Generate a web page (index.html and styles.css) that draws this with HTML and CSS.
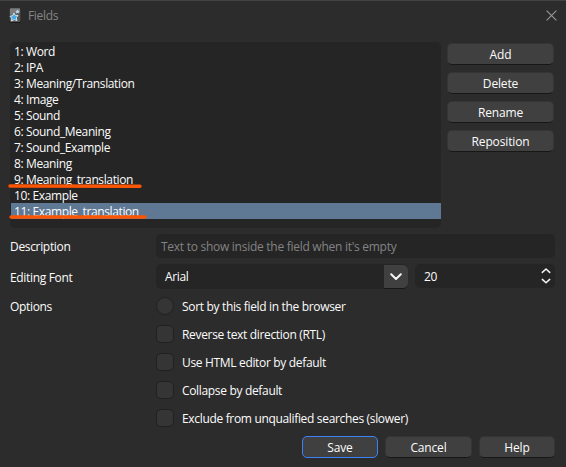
FILE: index.html
```html
<!DOCTYPE html>
<html lang="en">
<head>
<meta charset="utf-8">
<title>Fields</title>
<link rel="stylesheet" href="styles.css">
</head>
<body>
<div class="dialog">
  <header class="titlebar">
    <svg class="app-icon" width="12" height="15" viewBox="0 0 12 15">
      <rect x="0" y="0" width="12" height="15" rx="1.5" fill="#1c1c1c"/>
      <rect x="0.5" y="0" width="11" height="14" rx="1.5" fill="#555"/>
      <path class="sheen" d="M1 .5h10v4L1 7z"/>
      <path class="star" d="M4.800 5l1.400 2.300 2.800.2-1.700 2.200.7 2.900-2.900-1-2.500 1.400.1-2.900L1 8.300l2.900-.7z"/>
      <path class="small-star" d="M8.500 1.500l.7 1.300 1.500.2-1.100 1.100.2 1.500-1.400-.7-1.300.6.2-1.500-1-1 1.500-.3z"/>
    </svg>
    <span class="title">Fields</span>
    <svg class="close" width="11" height="11" viewBox="0 0 11 11"><path d="M.6.6l9.800 9.800M10.400.6L.6 10.400"/></svg>
  </header>
  <main class="top">
    <ul class="list">
      <li>1: Word</li>
      <li>2: IPA</li>
      <li>3: Meaning/Translation</li>
      <li>4: Image</li>
      <li>5: Sound</li>
      <li>6: Sound_Meaning</li>
      <li>7: Sound_Example</li>
      <li>8: Meaning</li>
      <li>9: Meaning_translation
        <svg class="mark" width="135" height="6" viewBox="0 0 135 6"><path d="M2 3L132 3.200"/></svg></li>
      <li>10: Example</li>
      <li class="selected">11: Example_translation
        <svg class="mark mark-last" width="139" height="6" viewBox="0 0 139 6"><path d="M2 3H136"/></svg></li>
    </ul>
    <div class="actions">
      <button>Add</button>
      <button>Delete</button>
      <button>Rename</button>
      <button>Reposition</button>
    </div>
  </main>
  <section class="form">
    <label>Description</label>
    <div class="field description">Text to show inside the field when it's empty</div>
    <label class="font-label">Editing Font</label>
    <div class="font-row">
      <div class="field combo"><span>Arial</span>
        <div class="drop"><svg width="12" height="8" viewBox="0 0 12 8"><path d="M1.200 1.300L6 6l4.800-4.700" stroke-width="2"/></svg></div>
      </div>
      <div class="field spin"><span>20</span>
        <svg width="10" height="18" viewBox="0 0 10 18"><path d="M1.300 5.400L5 2l3.700 3.400M1.300 12.400L5 15.800l3.700-3.400" stroke-width="1.500"/></svg>
      </div>
    </div>
    <label class="options-label">Options</label>
    <div class="options">
      <div class="option"><i class="box round"></i><span>Sort by this field in the browser</span></div>
      <div class="option"><i class="box"></i><span>Reverse text direction (RTL)</span></div>
      <div class="option"><i class="box"></i><span>Use HTML editor by default</span></div>
      <div class="option"><i class="box"></i><span>Collapse by default</span></div>
      <div class="option"><i class="box"></i><span>Exclude from unqualified searches (slower)</span></div>
    </div>
  </section>
  <footer class="footer">
    <button class="save">Save</button>
    <button class="cancel">Cancel</button>
    <button class="help">Help</button>
  </footer>
</div>
</body>
</html>
```
FILE: styles.css
```css
* { box-sizing: border-box; }
body {
  margin: 0;
  background: #2c2c2c;
  color: #fcfcfc;
  font: 12px/16px "Open Sans", "Noto Sans", sans-serif;
  letter-spacing: -0.33px;
  white-space: nowrap;
}
.dialog {
  width: 566px;
  height: 467px;
  border-top: 1px solid #434343;
  overflow: hidden;
}
.titlebar {
  height: 41px;
  padding: 7px 9px 0 9px;
  display: flex;
  align-items: flex-start;
}
.app-icon { margin-right: 7px; }
.title { color: #858585; letter-spacing: -0.33px; }
.close { margin: 2px 0 0 auto; }
.close path { stroke: #989898; stroke-width: 1.1; }
.top { display: flex; gap: 6px; padding: 0 12px 0 10px; }
.list {
  width: 431px;
  height: 186px;
  margin: 0;
  padding: 1px 0 0 1px;
  list-style: none;
  background: #252525;
  border-radius: 5px;
  letter-spacing: -0.38px;
}
.list li { position: relative; height: 16px; padding-left: 3px; line-height: 18px; }
.list li.selected { background: #5f7894; }
.mark { position: absolute; left: -3px; top: 12px; z-index: 1; }
.mark-last { left: -2px; top: 11px; }
.mark path { stroke: #fa5405; stroke-width: 3.4; stroke-linecap: round; }
svg path { fill: none; }
.app-icon .sheen { fill: #7c7c7c; }
.app-icon .star { fill: #48a7e8; stroke: #dcecf5; stroke-width: 0.9; }
.app-icon .small-star { fill: #b5daf0; }
button {
  height: 22px;
  padding: 1px 0 0;
  color: inherit;
  font: inherit;
  letter-spacing: -0.15px;
  background: #404040;
  border: 1px solid #353535;
  border-bottom-color: #171717;
  border-radius: 5px;
}
.actions {
  width: 107px;
  padding-top: 1px;
  display: flex;
  flex-direction: column;
  gap: 7px;
}
.form {
  margin: 6px 11px 0 10px;
  display: grid;
  grid-template-columns: 146px 1fr;
  grid-template-rows: 24px 25px 130px;
  row-gap: 6px;
}
.form label { padding-top: 5px; }
.form .font-label { padding-top: 6px; }
.form .options-label { padding-top: 4px; }
.field { height: 24px; background: #252525; border-radius: 5px; }
.description { padding: 5px; color: #838383; letter-spacing: -0.27px; }
.font-row { display: flex; gap: 7px; }
.combo {
  width: 252px;
  height: 25px;
  display: flex;
  justify-content: space-between;
  padding-left: 9px;
}
.combo span, .spin span { padding-top: 5px; }
.drop {
  width: 24px;
  height: 24px;
  margin-top: 1px;
  display: grid;
  place-items: center;
  background: #404040;
  border-bottom: 1px solid #171717;
  border-radius: 0 5px 5px 0;
}
.combo path, .spin path { stroke: #f5f5f5; stroke-linecap: round; stroke-linejoin: round; }
.spin {
  width: 140px;
  display: flex;
  align-items: center;
  justify-content: space-between;
  padding: 0 4px 0 9px;
}
.spin span { align-self: flex-start; }
.options { padding-top: 2px; display: grid; row-gap: 10px; grid-auto-rows: 18px; }
.option { display: flex; align-items: center; gap: 8px; }
.option span { padding-top: 2px; }
.box {
  width: 18px;
  height: 18px;
  background: #353535;
  border: 1px solid #202020;
  border-radius: 5px;
}
.round { border-radius: 50%; }
.footer {
  margin-top: 11px;
  padding-right: 11px;
  display: flex;
  justify-content: flex-end;
  gap: 7px;
}
.footer .save { width: 76px; border-color: #3b82f6; }
.cancel { width: 87px; }
.help { width: 76px; }
```
